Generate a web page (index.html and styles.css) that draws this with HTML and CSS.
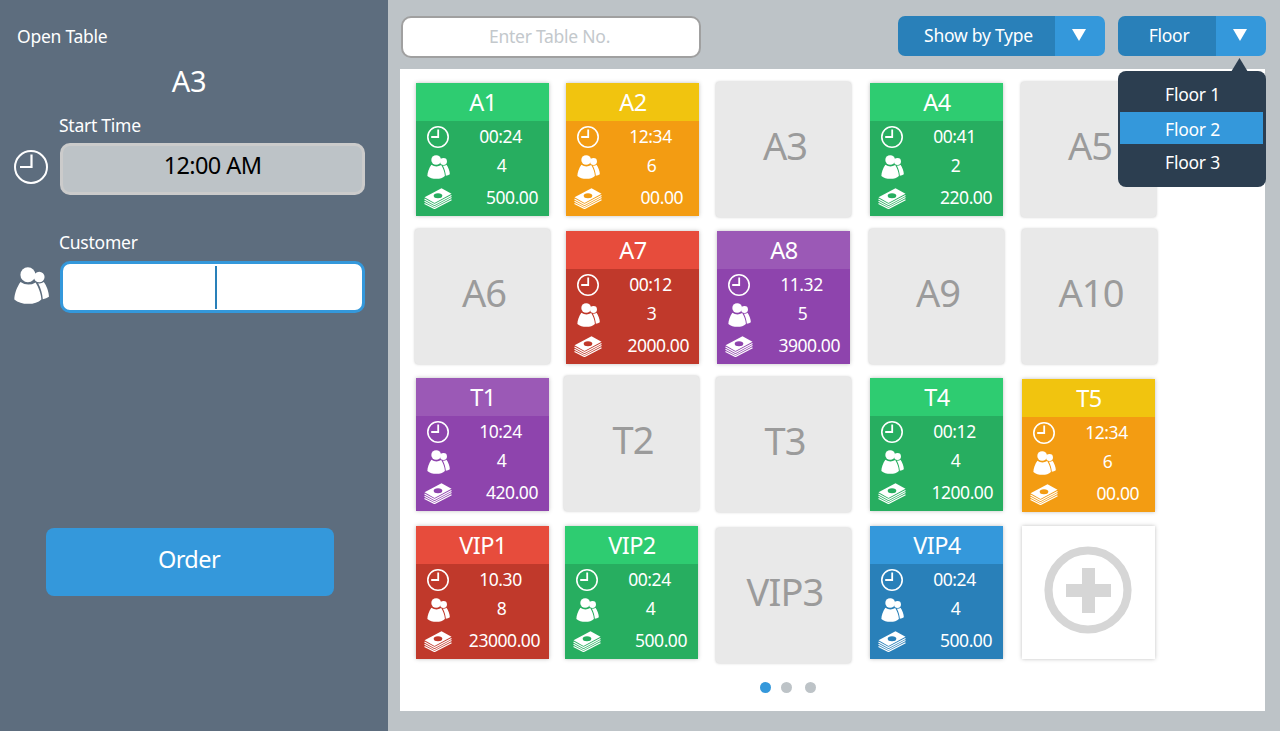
FILE: index.html
```html
<!DOCTYPE html>
<html lang="en">
<head>
<meta charset="utf-8">
<title>Open Table</title>
<link rel="stylesheet" href="styles.css">
</head>
<body>
<svg class="defs" width="0" height="0">
  <symbol id="clock" viewBox="0 0 34 34"><circle cx="17" cy="17" r="16" fill="none" stroke="#fff" stroke-width="2"/><path d="M17.500 4.500V17H6" fill="none" stroke="#fff" stroke-width="2.200"/></symbol>
  <symbol id="clock-small" viewBox="0 0 22 22"><circle cx="11" cy="11" r="10.200" fill="none" stroke="#fff" stroke-width="1.600"/><path d="M11.200 3.500V11H4.200" fill="none" stroke="#fff" stroke-width="1.800"/></symbol>
  <symbol id="people" viewBox="0 0 34 36"><g fill="#fff"><circle cx="24.500" cy="9.700" r="5.200"/><path d="M23.500 15.800q3 .600 5.500-1.300c2.500 3.500 5 9.500 5 14.500q-2.500 2-6 2.300C27.600 26 26 20.500 23.500 15.800z"/><circle cx="13.500" cy="7.500" r="7.300"/><path d="M6.300 14.500q7.200 5 14.700.500C23.500 19 26.500 26 26.600 31.500q-4.500 4.300-12.800 4.300T.300 31.500C.300 26 3 19 6.300 14.500z"/></g></symbol>
  <symbol id="money" viewBox="0 0 28 21"><path d="M.500 9.300 17.500.300 27.500 5.800 10.500 15z" fill="#fff"/><ellipse cx="14" cy="7.700" rx="4.300" ry="2.500" fill="currentColor"/><path d="M.500 11 10.500 16.600 27.500 7.400M.500 13.300 10.500 18.700 27.500 9.600M.500 15.500 10.500 20.600 27.500 11.700" fill="none" stroke="#fff" stroke-width="1.150"/></symbol>
</svg>
<div class="app">
  <aside class="sidebar">
    <h1 class="sidebar-title">Open Table</h1>
    <div class="table-name">A3</div>
    <div class="label">Start Time</div>
    <div class="row"><svg class="side-clock"><use href="#clock"/></svg><div class="field">12:00 AM</div></div>
    <div class="label label-customer">Customer</div>
    <div class="row"><svg class="side-people"><use href="#people"/></svg><div class="field field-active"><span class="caret"></span></div></div>
    <div class="order">Order</div>
  </aside>
  <main class="main">
    <header class="toolbar">
      <div class="search">Enter Table No.</div>
      <div class="select type"><span class="select-text">Show by Type</span><span class="select-btn"><i class="tri"></i></span></div>
      <div class="select floor"><span class="select-text">Floor</span><span class="select-btn"><i class="tri"></i></span>
        <div class="menu"><div class="item">Floor 1</div><div class="item item-on">Floor 2</div><div class="item">Floor 3</div></div>
      </div>
    </header>
    <section class="panel">
      <div class="grid">
        <article class="tile green"><h2>A1</h2><div class="info"><svg class="clock"><use href="#clock-small"/></svg><span class="time">00:24</span><svg class="people"><use href="#people"/></svg><span class="count">4</span><svg class="money"><use href="#money"/></svg><span class="sum">500.00</span></div></article>
        <article class="tile yellow"><h2>A2</h2><div class="info"><svg class="clock"><use href="#clock-small"/></svg><span class="time">12:34</span><svg class="people"><use href="#people"/></svg><span class="count">6</span><svg class="money"><use href="#money"/></svg><span class="sum short">00.00</span></div></article>
        <article class="tile free">A3</article>
        <article class="tile green"><h2>A4</h2><div class="info"><svg class="clock"><use href="#clock-small"/></svg><span class="time">00:41</span><svg class="people"><use href="#people"/></svg><span class="count">2</span><svg class="money"><use href="#money"/></svg><span class="sum">220.00</span></div></article>
        <article class="tile free">A5</article>

        <article class="tile free up">A6</article>
        <article class="tile red"><h2>A7</h2><div class="info"><svg class="clock"><use href="#clock-small"/></svg><span class="time">00:12</span><svg class="people"><use href="#people"/></svg><span class="count">3</span><svg class="money"><use href="#money"/></svg><span class="sum long">2000.00</span></div></article>
        <article class="tile purple"><h2>A8</h2><div class="info"><svg class="clock"><use href="#clock-small"/></svg><span class="time">11.32</span><svg class="people"><use href="#people"/></svg><span class="count">5</span><svg class="money"><use href="#money"/></svg><span class="sum long">3900.00</span></div></article>
        <article class="tile free up">A9</article>
        <article class="tile free up right">A10</article>

        <article class="tile purple"><h2>T1</h2><div class="info"><svg class="clock"><use href="#clock-small"/></svg><span class="time">10:24</span><svg class="people"><use href="#people"/></svg><span class="count">4</span><svg class="money"><use href="#money"/></svg><span class="sum">420.00</span></div></article>
        <article class="tile free up left">T2</article>
        <article class="tile free">T3</article>
        <article class="tile green"><h2>T4</h2><div class="info"><svg class="clock"><use href="#clock-small"/></svg><span class="time">00:12</span><svg class="people"><use href="#people"/></svg><span class="count">4</span><svg class="money"><use href="#money"/></svg><span class="sum long">1200.00</span></div></article>
        <article class="tile yellow down"><h2>T5</h2><div class="info"><svg class="clock"><use href="#clock-small"/></svg><span class="time">12:34</span><svg class="people"><use href="#people"/></svg><span class="count">6</span><svg class="money"><use href="#money"/></svg><span class="sum short">00.00</span></div></article>

        <article class="tile red"><h2>VIP1</h2><div class="info"><svg class="clock"><use href="#clock-small"/></svg><span class="time">10.30</span><svg class="people"><use href="#people"/></svg><span class="count">8</span><svg class="money"><use href="#money"/></svg><span class="sum longest">23000.00</span></div></article>
        <article class="tile green left"><h2>VIP2</h2><div class="info"><svg class="clock"><use href="#clock-small"/></svg><span class="time">00:24</span><svg class="people"><use href="#people"/></svg><span class="count">4</span><svg class="money"><use href="#money"/></svg><span class="sum">500.00</span></div></article>
        <article class="tile free low">VIP3</article>
        <article class="tile blue"><h2>VIP4</h2><div class="info"><svg class="clock"><use href="#clock-small"/></svg><span class="time">00:24</span><svg class="people"><use href="#people"/></svg><span class="count">4</span><svg class="money"><use href="#money"/></svg><span class="sum">500.00</span></div></article>
        <article class="tile add"><svg width="88" height="88" viewBox="0 0 88 88"><circle cx="44" cy="44" r="39.500" fill="none" stroke="#d6d6d6" stroke-width="8.200"/><path d="M38 22h13v16h16v13H51v16H38V51H22V38h16z" fill="#d6d6d6"/></svg></article>
      </div>
      <div class="dots"><i class="dot dot-on"></i><i class="dot"></i><i class="dot"></i></div>
    </section>
  </main>
</div>
</body>
</html>
```
FILE: styles.css
```css
* { box-sizing: border-box; }
body { margin: 0; font-family: "Noto Sans", "Open Sans", sans-serif; font-size: 17.5px; letter-spacing: -0.25px; color: #fff; }
h1, h2 { margin: 0; font-weight: 400; }
.defs { position: absolute; }
.app { display: flex; width: 1280px; height: 731px; overflow: hidden; background: #bdc3c7; }

.sidebar { width: 388px; background: #5d6d7e; padding-top: 23px; flex: none; }
.sidebar-title { font-size: 17.5px; line-height: 26px; padding-left: 17px; }
.table-name { font-size: 29px; line-height: 40px; margin-top: 12px; text-align: center; padding-right: 10px; }
.label { line-height: 24px; margin-top: 12px; padding-left: 59px; }
.label-customer { margin-top: 35px; }
.row { display: flex; align-items: center; margin-top: 6px; padding-left: 14px; }
.label-customer + .row { margin-top: 7px; }
.side-clock { width: 34px; height: 34px; margin: -4px 12px 0 0; }
.side-people { width: 35px; height: 37px; margin: -4px 11px 0 0; }
.field { width: 305px; height: 52px; border: 3px solid #cbcbcb; border-radius: 10px; background: #bdc3c7; color: #000; font-size: 23.5px; letter-spacing: -0.6px; line-height: 39px; text-align: center; }
.field-active { background: #fff; border-color: #3498db; padding: 2px 0 0 7px; }
.caret { display: block; width: 2px; height: 43px; margin: 0 auto; background: #2980b9; }
.order { width: 288px; height: 68px; margin: 215px 0 0 46px; border-radius: 8px; background: #3498db; font-size: 23.5px; letter-spacing: -0.6px; line-height: 63px; text-align: center; padding-right: 2px; }

.main { flex: 1; padding: 16px 0 0 12px; }
.toolbar { display: flex; height: 53px; }
.search { width: 300px; height: 42px; margin-left: 1px; border: 2px solid #a0a0a0; border-radius: 10px; background: #fff; color: #c3c8cc; line-height: 36px; padding-right: 3px; text-align: center; }
.select { display: flex; height: 40px; line-height: 38px; text-align: center; position: relative; }
.type { margin-left: 197px; }
.floor { margin-left: 13px; }
.select-text { width: 157px; padding-left: 4px; background: #2980b9; border-radius: 7px 0 0 7px; }
.floor .select-text { width: 98px; line-height: 39px; }
.select-btn { width: 50px; background: #3498db; border-radius: 0 7px 7px 0; display: flex; justify-content: center; padding: 13px 2px 0 0; }
.tri { width: 14px; height: 12px; background: #fff; clip-path: polygon(0 0, 100% 0, 50% 100%); }
.menu { position: absolute; z-index: 2; left: 0; top: 55px; width: 148px; height: 116px; padding: 7px 3px 0 2px; background: #2c3e50; border-radius: 8px; }
.menu::before { content: ""; position: absolute; left: 113px; top: -13px; width: 17px; height: 14px; background: #2c3e50; clip-path: polygon(50% 0, 100% 100%, 0 100%); }
.item { height: 34px; line-height: 33px; padding-left: 2px; }
.item-on { height: 32px; line-height: 34px; background: #3498db; }
.item:last-child { line-height: 37px; }

.panel { width: 865px; height: 642px; background: #fff; padding: 14px 0 0 16px; }
.grid { display: grid; grid-template-columns: 150px 151px 153px 152px 133px; grid-template-rows: 148px 147px 148px 133px; align-items: start; justify-items: start; }
.tile { width: 133px; height: 133px; box-shadow: 0 0 4px rgba(0, 0, 0, .25); }
.tile h2 { height: 38px; font-size: 23.5px; line-height: 38px; text-align: center; letter-spacing: -0.6px; padding-left: 1px; }
.free { width: 135px; height: 135px; margin: -1px 0 0 -1px; border-radius: 3px; background: #e9e9e9; box-shadow: 0 0 3px rgba(0, 0, 0, .25); color: #9b9b9b; font-size: 38px; line-height: 127px; text-align: center; letter-spacing: -0.9px; padding-left: 3px; }
.up { margin-top: -2px; }
.left { margin-left: -1px; }
.free.left { margin-left: -2px; }
.right { margin-left: 0; }
.down { margin-top: 1px; }
.low { margin-top: 2px; }
.info { display: grid; grid-template-columns: 36px 1fr; grid-template-rows: 30px 28px 36px; align-items: center; letter-spacing: -0.45px; }
.clock { width: 22px; height: 22px; margin-left: 11px; margin-top: 2px; }
.people { width: 23px; height: 24px; margin-left: 11px; margin-top: 3px; }
.money { width: 28px; height: 21px; margin-left: 8px; margin-top: 2px; }
.time { text-align: center; }
.count { text-align: center; padding-left: 2px; margin-top: -1px; }
.sum { text-align: right; padding-right: 11px; margin-top: -1px; white-space: nowrap; }
.short { padding-right: 16px; }
.long { padding-right: 10px; }
.longest { padding-right: 9px; }
.green { background: #27ae60; color: #27ae60; }
.green h2 { background: #2ecc71; }
.yellow { background: #f39c12; color: #f39c12; }
.yellow h2 { background: #f1c40f; }
.red { background: #c0392b; color: #c0392b; }
.red h2 { background: #e74c3c; }
.purple { background: #8e44ad; color: #8e44ad; }
.purple h2 { background: #9b59b6; }
.blue { background: #2980b9; color: #2980b9; }
.blue h2 { background: #3498db; }
.tile h2, .info span { color: #fff; }
.add { display: flex; align-items: center; justify-content: center; padding: 0 2px 5px 0; background: #fff; }
.dots { display: flex; padding: 23px 0 0 344px; }
.dot { width: 11px; height: 11px; border-radius: 50%; background: #bdc3c7; margin-right: 13px; }
.dot-on { background: #3498db; margin-right: 10px; }
```
